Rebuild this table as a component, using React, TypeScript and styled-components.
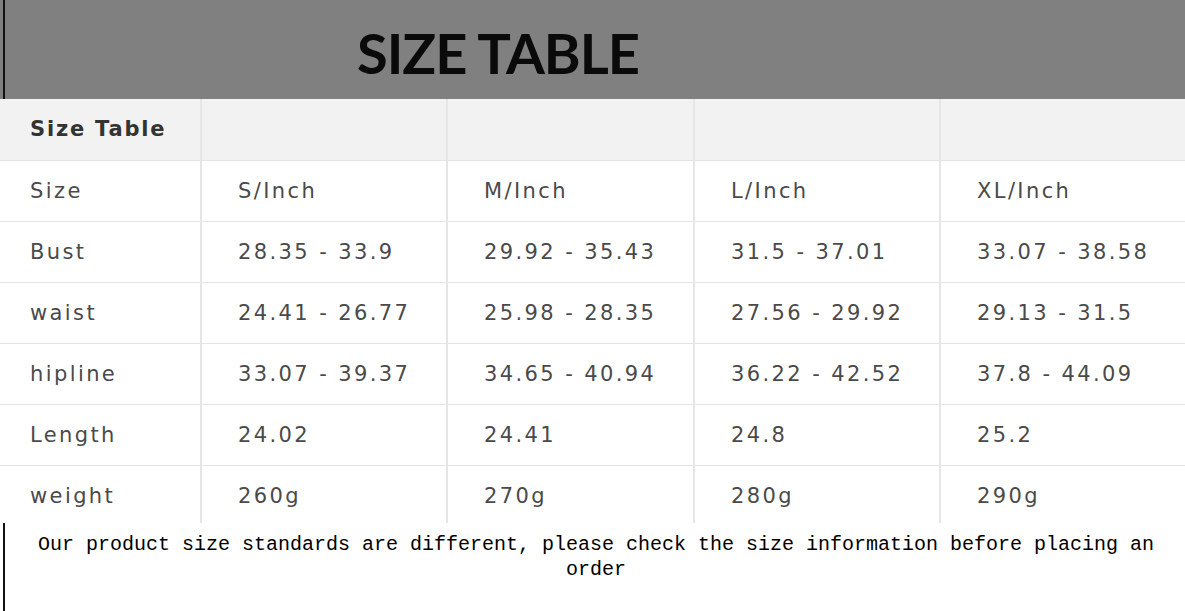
import styled, { createGlobalStyle } from 'styled-components';

const GlobalStyle = createGlobalStyle`
  html, body {
    margin: 0;
    padding: 0;
    background: #fff;
  }
  body {
    width: 1185px;
    height: 611px;
    overflow: hidden;
  }
`;

const Banner = styled.header`
  height: 99px;
  background: #808080;
  padding-left: 3px;
  display: flex;
`;

const BannerInner = styled.div`
  flex: 1;
  border-left: 2px solid #111;
  display: flex;
  align-items: center;
  padding-left: 352px;
`;

const Title = styled.h1`
  margin: 6px 0 0;
  font-family: Lato, 'Open Sans', sans-serif;
  font-weight: 700;
  font-size: 56px;
  letter-spacing: -1px;
  color: #0a0a0a;
`;

const Table = styled.table`
  width: 1185px;
  border-collapse: collapse;
  table-layout: fixed;
  font-family: 'DejaVu Sans', Verdana, sans-serif;
  font-size: 21px;
  color: #4a4a4a;
`;

const Row = styled.tr<{ $head?: boolean; $last?: boolean }>`
  height: ${(p) => (p.$last ? '58px' : '61px')};
  background: ${(p) => (p.$head ? '#f2f2f2' : '#fff')};
  border-bottom: ${(p) => (p.$last ? 'none' : '1px solid #e4e4e4')};
`;

const Cell = styled.td<{ $first?: boolean; $bold?: boolean; $last?: boolean }>`
  padding: ${(p) => (p.$last ? '4px' : '0')} 0 0 ${(p) => (p.$first ? '30px' : '36px')};
  border-right: 2px solid #e6e6e6;
  white-space: nowrap;
  vertical-align: middle;
  font-weight: ${(p) => (p.$bold ? 700 : 400)};
  color: ${(p) => (p.$bold ? '#333' : '#4a4a4a')};
  letter-spacing: ${(p) => (p.$bold ? '1.8px' : '2.4px')};
  &:last-child {
    border-right: none;
  }
`;

const Footer = styled.footer`
  height: 88px;
  margin-left: 3px;
  border-left: 2px solid #111;
  padding: 9px 17px 0 19px;
  box-sizing: border-box;
  font-family: 'Liberation Mono', 'Courier New', monospace;
  font-size: 20px;
  line-height: 25px;
  text-align: center;
  color: #000;
`;

const rows: string[][] = [
  ['Size', 'S/Inch', 'M/Inch', 'L/Inch', 'XL/Inch'],
  ['Bust', '28.35 - 33.9', '29.92 - 35.43', '31.5 - 37.01', '33.07 - 38.58'],
  ['waist', '24.41 - 26.77', '25.98 - 28.35', '27.56 - 29.92', '29.13 - 31.5'],
  ['hipline', '33.07 - 39.37', '34.65 - 40.94', '36.22 - 42.52', '37.8 - 44.09'],
  ['Length', '24.02', '24.41', '24.8', '25.2'],
  ['weight', '260g', '270g', '280g', '290g'],
];

export default function App() {
  return (
    <>
      <GlobalStyle />
      <Banner>
        <BannerInner>
          <Title>SIZE TABLE</Title>
        </BannerInner>
      </Banner>
      <Table>
        <colgroup>
          <col style={{ width: 201 }} />
          <col style={{ width: 246 }} />
          <col style={{ width: 247 }} />
          <col style={{ width: 246 }} />
          <col style={{ width: 245 }} />
        </colgroup>
        <tbody>
          <Row $head>
            <Cell $first $bold>Size Table</Cell>
            <Cell />
            <Cell />
            <Cell />
            <Cell />
          </Row>
          {rows.map((r, i) => {
            const last = i === rows.length - 1;
            return (
              <Row key={r[0]} $last={last}>
                {r.map((c, j) => (
                  <Cell key={j} $first={j === 0} $last={last}>
                    {c}
                  </Cell>
                ))}
              </Row>
            );
          })}
        </tbody>
      </Table>
      <Footer>
        Our product size standards are different, please check the size information before placing an order
      </Footer>
    </>
  );
}
